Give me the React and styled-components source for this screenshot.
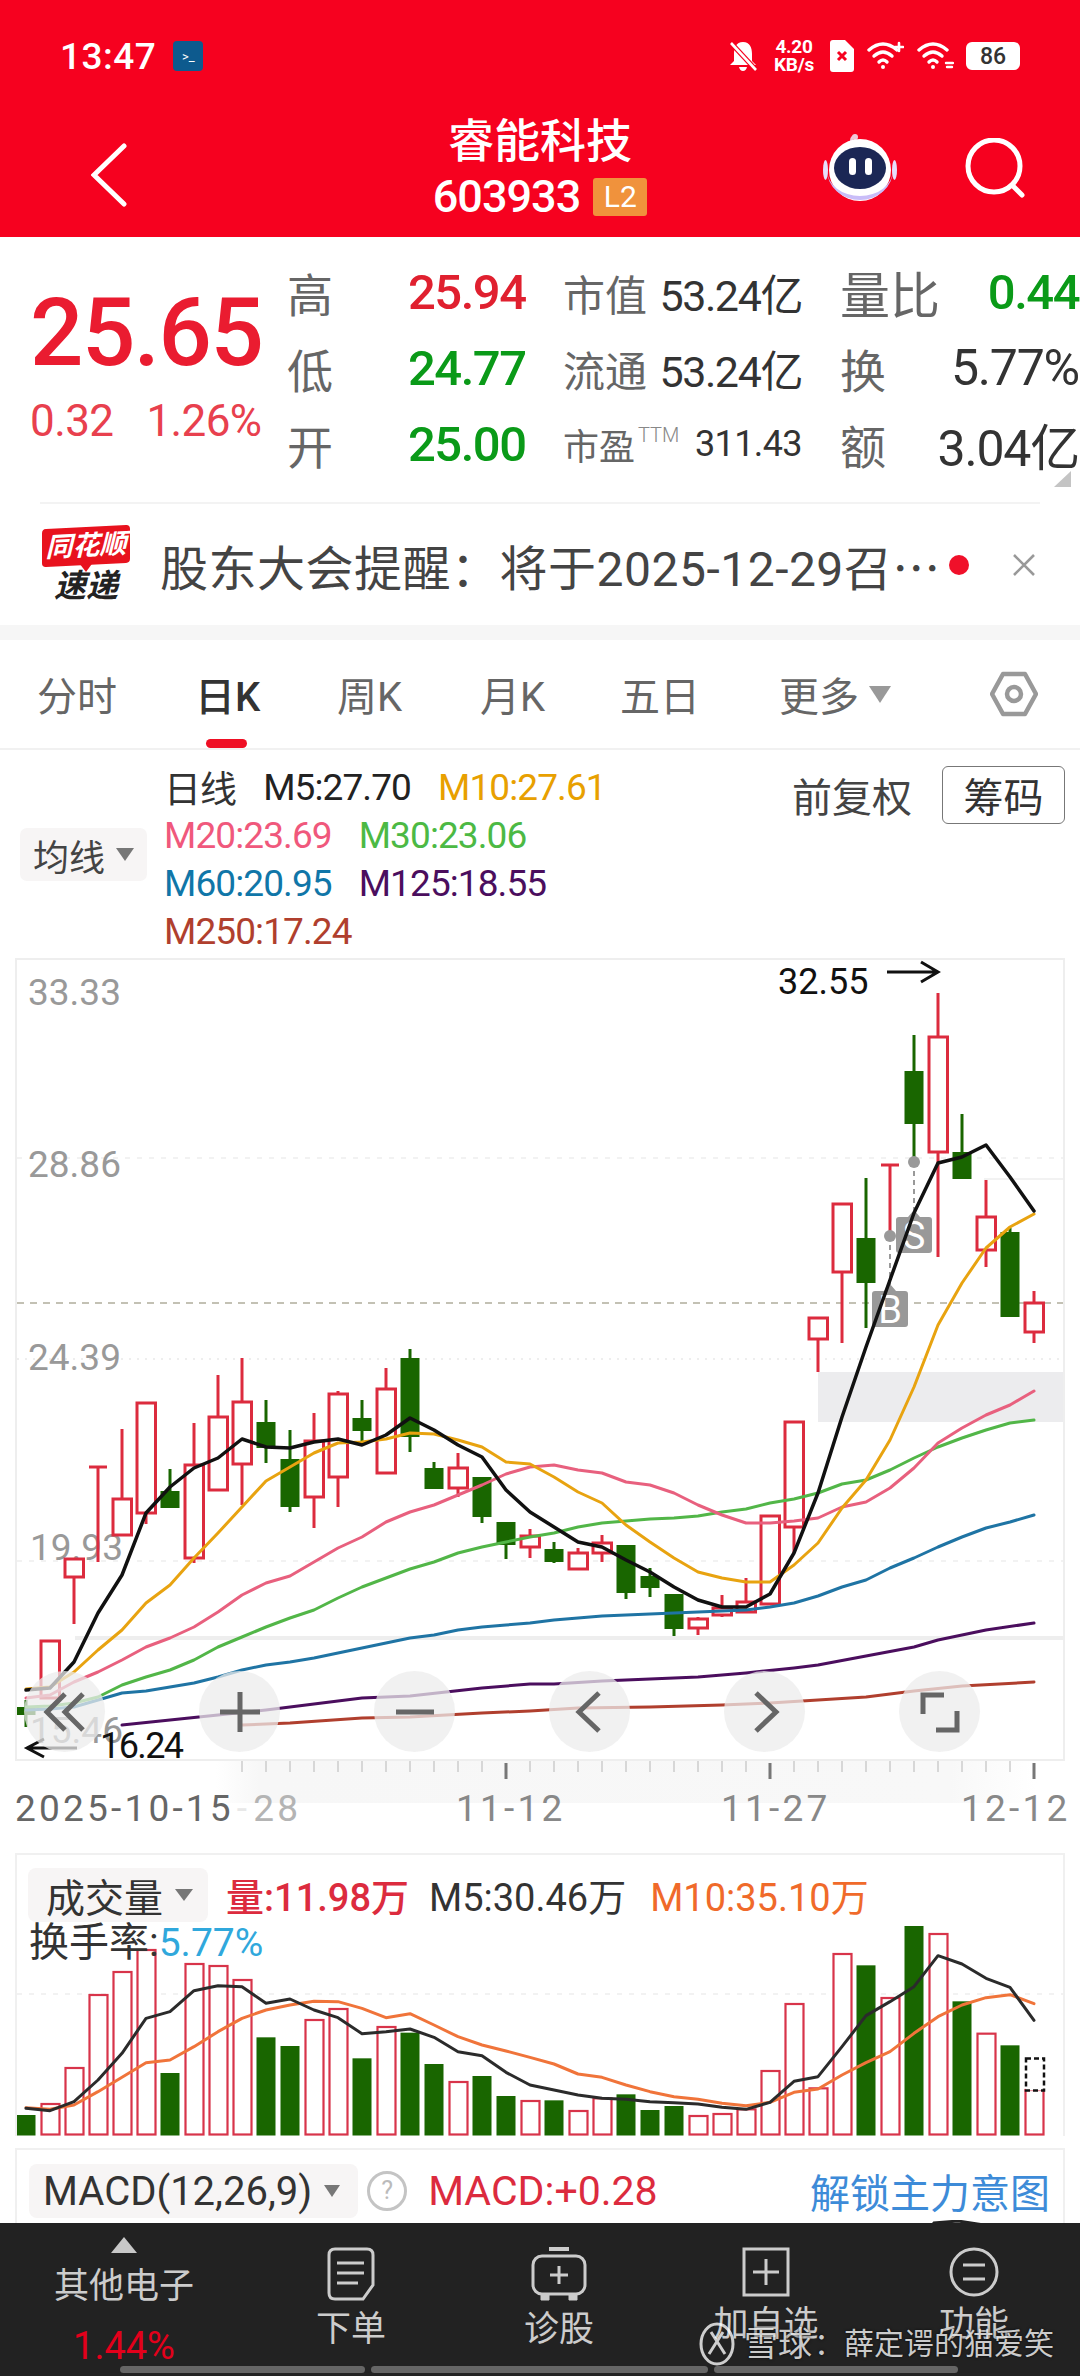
import styled, { createGlobalStyle } from "styled-components"

const Global = createGlobalStyle`
  html, body { margin: 0; padding: 0; background: #fff; }
  body { font-family: Roboto, "Noto Sans CJK SC", sans-serif; color: #333; }
  * { box-sizing: border-box; }
`

const RED = "#dc2b3e"
const GREEN = "#196600"
const stepX = (i) => 26 + 24 * i

// i => type, wick top, body top, body bottom, wick bottom
const candles = [
  ["g", 1700, 1707, 1715, 1727], ["r", 1641, 1641, 1698, 1698], ["r", 1559, 1559, 1577, 1624], ["r", 1467, 1467, 1468, 1562],
  ["r", 1429, 1499, 1535, 1535], ["r", 1403, 1403, 1513, 1524], ["g", 1469, 1491, 1508, 1508], ["r", 1423, 1465, 1558, 1563],
  ["r", 1375, 1417, 1490, 1490], ["r", 1358, 1402, 1464, 1505], ["g", 1400, 1422, 1448, 1463], ["g", 1430, 1459, 1507, 1512],
  ["r", 1413, 1441, 1497, 1528], ["r", 1391, 1394, 1477, 1507], ["g", 1400, 1418, 1431, 1443], ["r", 1368, 1389, 1473, 1473],
  ["g", 1349, 1358, 1437, 1452], ["g", 1462, 1468, 1489, 1489], ["r", 1453, 1468, 1488, 1497], ["g", 1477, 1477, 1517, 1523],
  ["g", 1522, 1522, 1545, 1559], ["r", 1529, 1536, 1547, 1558], ["g", 1542, 1549, 1562, 1563], ["r", 1548, 1553, 1569, 1569],
  ["r", 1535, 1543, 1553, 1562], ["g", 1545, 1545, 1593, 1599], ["g", 1568, 1576, 1588, 1597], ["g", 1594, 1594, 1629, 1636],
  ["r", 1617, 1619, 1628, 1635], ["r", 1595, 1608, 1615, 1617], ["r", 1578, 1602, 1612, 1612], ["r", 1516, 1516, 1604, 1604],
  ["r", 1422, 1422, 1527, 1553], ["r", 1318, 1318, 1339, 1372], ["r", 1204, 1204, 1272, 1343], ["g", 1178, 1238, 1283, 1328],
  ["r", 1165, 1165, 1166, 1236], ["g", 1035, 1071, 1124, 1162], ["r", 993, 1037, 1152, 1257], ["g", 1114, 1152, 1179, 1179],
  ["r", 1180, 1217, 1250, 1267], ["g", 1228, 1232, 1317, 1317], ["r", 1291, 1303, 1332, 1343],
]

const m5 = [1690,1688,1662,1613,1575,1513,1487,1468,1458,1439,1447,1448,1442,1439,1445,1435,1418,1430,1445,1457,1490,1512,1527,1542,1547,1560,1572,1587,1600,1607,1607,1594,1553,1493,1417,1347,1280,1213,1163,1157,1145,1177,1211]
const m10 = [1689,1687,1672,1650,1630,1603,1585,1558,1533,1507,1481,1467,1453,1443,1442,1439,1433,1434,1440,1447,1462,1464,1477,1492,1503,1525,1542,1558,1572,1578,1582,1582,1565,1543,1508,1480,1440,1387,1325,1283,1248,1227,1214]
const m20 = [1698,1695,1682,1672,1660,1647,1638,1627,1612,1595,1583,1576,1562,1548,1537,1522,1512,1505,1495,1485,1474,1467,1465,1470,1473,1482,1485,1493,1505,1515,1523,1523,1521,1518,1507,1502,1488,1468,1443,1428,1415,1405,1391]
const m30 = [1707,1706,1703,1697,1685,1677,1670,1660,1647,1637,1627,1618,1610,1598,1587,1578,1569,1562,1553,1547,1542,1537,1533,1527,1523,1521,1519,1518,1516,1512,1509,1503,1499,1493,1484,1480,1470,1458,1447,1438,1430,1423,1420]
const m60 = [1710,1709,1707,1700,1693,1691,1687,1683,1677,1670,1665,1662,1658,1653,1648,1643,1638,1635,1630,1627,1625,1623,1620,1618,1616,1615,1614,1613,1612,1611,1610,1607,1603,1596,1587,1580,1568,1558,1547,1537,1528,1522,1515]
const m125 = [[4,1725],[8,1715],[10,1710],[14,1698],[16,1696],[19,1688],[21,1684],[22,1684],[24,1681],[26,1679],[28,1677],[30,1673],[32,1668],[33,1665],[35,1656],[37,1647],[38,1640],[40,1630],[42,1623]]
const m250 = [[9,1725],[11,1723],[14,1718],[16,1717],[19,1713],[21,1711],[23,1708],[26,1707],[29,1705],[31,1703],[33,1700],[35,1697],[37,1691],[39,1686],[42,1682]]

const volTops = [825,792,684,465,396,330,699,372,378,420,592,618,540,507,655,561,578,672,726,708,768,783,781,813,775,763,810,798,828,822,808,693,492,745,342,376,474,258,282,484,581,616,750]
const volM5 = [805,812,785,720,640,535,515,452,437,440,490,477,510,533,581,575,567,592,635,647,697,735,750,765,775,778,785,788,792,802,808,787,724,710,620,527,485,440,347,372,415,442,541]
const volM10 = [803,808,795,755,712,668,660,620,575,535,510,495,484,485,505,533,521,555,590,615,633,652,672,702,712,735,755,770,778,790,797,787,757,747,705,668,635,580,530,495,473,464,491]

const pts = (ys) => ys.map((y, i) => `${stepX(i)},${y}`).join(" ")
const sparse = (list) => list.map(([i, y]) => `${stepX(i)},${y}`).join(" ")
const volPts = (zs) => zs.map((z, i) => `${stepX(i)},${1840 + z / 3}`).join(" ")

const Page = styled.div`
  width: 1080px;
  height: 2376px;
  overflow: hidden;
  display: flex;
  flex-direction: column;
  background: #fff;
`
const Scroll = styled.div`
  height: 2223px;
  flex: none;
  overflow: hidden;
`

/* red header */
const Header = styled.header`
  height: 237px;
  background: #f6011f;
  color: #fff;
`
const StatusBar = styled.div`
  height: 112px;
  display: flex;
  align-items: center;
  padding: 0 60px;
`
const Clock = styled.span`
  font-size: 37px;
  font-weight: 500;
  letter-spacing: 0.5px;
`
const AppBadge = styled.span`
  width: 30px;
  height: 30px;
  margin-left: 17px;
  border-radius: 4px;
  background: #0d5a8e;
  color: #fff;
  font-size: 13px;
  display: flex;
  align-items: center;
  justify-content: center;
`
const StatusRight = styled.div`
  margin-left: auto;
  display: flex;
  align-items: center;
  gap: 12px;
`
const NetSpeed = styled.div`
  display: flex;
  flex-direction: column;
  align-items: center;
  font-weight: 700;
  font-size: 19px;
  line-height: 18px;
  letter-spacing: -0.3px;
  width: 48px;
`
const Battery = styled.span`
  width: 54px;
  height: 28px;
  background: #fff;
  border-radius: 6px;
  color: #333;
  font-size: 23px;
  font-weight: 500;
  display: flex;
  align-items: center;
  justify-content: center;
`
const NavBar = styled.div`
  height: 125px;
  display: grid;
  grid-template-columns: 1fr auto 1fr;
  align-items: center;
  padding: 0 55px;
`
const BackButton = styled.span`
  margin-left: 36px;
  display: flex;
`
const TitleBox = styled.div`
  display: flex;
  flex-direction: column;
  align-items: center;
  margin-top: -20px;
`
const Title = styled.div`
  font-size: 46px;
  line-height: 56px;
  font-weight: 500;
`
const CodeRow = styled.div`
  display: flex;
  align-items: center;
  gap: 13px;
  margin-top: 8px;
`
const Code = styled.span`
  font-size: 45px;
  line-height: 40px;
  font-weight: 500;
  letter-spacing: -1px;
`
const L2 = styled.span`
  width: 54px;
  height: 38px;
  background: #f0923c;
  border-radius: 3px;
  font-size: 30px;
  line-height: 38px;
  text-align: center;
`
const NavIcons = styled.div`
  justify-self: end;
  display: flex;
  align-items: center;
  gap: 68px;
  margin-top: -14px;
`

/* quote block */
const Quote = styled.section`
  height: 265px;
  padding: 17px 0 0;
  display: flex;
  position: relative;
`
const PriceBox = styled.div`
  width: 287px;
  padding: 32px 0 0 30px;
  color: #ea1c30;
`
const Price = styled.div`
  font-size: 94px;
  line-height: 94px;
  font-weight: 500;
  letter-spacing: -1.5px;
`
const Changes = styled.div`
  display: flex;
  gap: 33px;
  margin-top: 20px;
  font-size: 44px;
  line-height: 42px;
  letter-spacing: -0.6px;
  color: #e8404e;
`
const StatGrid = styled.div`
  display: grid;
  grid-template-columns: 121px 155px 239px 277px;
  grid-auto-rows: 76px;
`
const Cell = styled.div`
  display: flex;
  align-items: center;
  justify-content: ${(p) => (p.$split ? "space-between" : "flex-start")};
  padding-left: ${(p) => p.$pad || 0}px;
`
const BigLabel = styled.span`
  font-size: ${(p) => p.$size || 46}px;
  color: #666;
`
const PriceValue = styled.span`
  font-size: 49px;
  font-weight: 500;
  letter-spacing: -1.5px;
  color: ${(p) => p.$c};
`
const MidValue = styled.span`
  font-size: ${(p) => p.$size || 43}px;
  letter-spacing: ${(p) => p.$ls ?? -1.4}px;
  color: #333;
`
const Ttm = styled.span`
  font-size: 20px;
  font-weight: 300;
  color: #888;
  align-self: flex-start;
  margin: 5px 0 0 3px;
`
const LabelPair = styled.span`
  display: flex;
`
const Corner = styled.span`
  position: absolute;
  right: 9px;
  bottom: 15px;
  width: 0;
  height: 0;
  border-left: 17px solid transparent;
  border-bottom: 16px solid #c4c4c4;
`

/* news row */
const News = styled.section`
  margin: 0 40px;
  padding: 0 0 0 2px;
  height: 123px;
  border-top: 2px solid #f3f3f3;
  display: flex;
  align-items: center;
`
const Logo = styled.div`
  width: 88px;
  flex: none;
  display: flex;
  flex-direction: column;
  align-items: center;
`
const LogoTop = styled.div`
  width: 88px;
  height: 38px;
  background: #e8121e;
  border-radius: 4px;
  transform: skewY(-3deg);
  color: #fff;
  font-size: 27px;
  line-height: 38px;
  font-weight: 700;
  font-style: italic;
  text-align: center;
  position: relative;
  &::after {
    content: "";
    position: absolute;
    left: 38px;
    bottom: -7px;
    width: 0;
    height: 0;
    border-left: 6px solid transparent;
    border-right: 6px solid transparent;
    border-top: 8px solid #e8121e;
  }
`
const LogoBottom = styled.div`
  margin-top: 5px;
  font-size: 32px;
  line-height: 32px;
  font-weight: 700;
  font-style: italic;
  color: #222;
`
const NewsText = styled.div`
  margin-left: 30px;
  width: 780px;
  flex: none;
  font-size: 48px;
  letter-spacing: 0.5px;
  color: #444;
  white-space: nowrap;
  overflow: hidden;
`
const RedDot = styled.span`
  width: 20px;
  height: 20px;
  border-radius: 50%;
  background: #f0102a;
  margin-left: 9px;
  flex: none;
`
const CloseX = styled.span`
  margin-left: 43px;
  display: flex;
`
const GreyBand = styled.div`
  height: 15px;
  background: #f6f6f6;
`

/* period tabs */
const Tabs = styled.nav`
  height: 110px;
  border-bottom: 2px solid #f1f1f1;
  padding-left: 37px;
  display: grid;
  grid-template-columns: 158px 142px 143px 140px 159px 211px auto;
  align-items: center;
`
const Tab = styled.div`
  height: 108px;
  display: flex;
  align-items: center;
  gap: 10px;
  font-size: 40px;
  color: ${(p) => (p.$on ? "#333" : "#666")};
  font-weight: ${(p) => (p.$on ? 500 : 400)};
  position: relative;
  ${(p) =>
    p.$on &&
    `&::after {
      content: "";
      position: absolute;
      left: 11px;
      bottom: 0;
      width: 41px;
      height: 9px;
      border-radius: 5px;
      background: #ef0f24;
    }`}
`
const Tri = styled.span`
  width: 0;
  height: 0;
  border-left: ${(p) => p.$w || 11}px solid transparent;
  border-right: ${(p) => p.$w || 11}px solid transparent;
  border-top: ${(p) => p.$h || 17}px solid ${(p) => p.$c || "#999"};
`

/* moving average legend */
const LegendArea = styled.section`
  height: 208px;
  padding: 13px 15px 0 20px;
  display: flex;
`
const MaButton = styled.div`
  width: 127px;
  height: 53px;
  margin: 65px 17px 0 0;
  background: #f7f5f5;
  border-radius: 7px;
  display: flex;
  align-items: center;
  gap: 11px;
  padding-left: 13px;
  font-size: 36px;
  color: #444;
`
const LegendRows = styled.div`
  flex: 1;
  display: flex;
  flex-direction: column;
`
const LegendRow = styled.div`
  height: 48px;
  display: flex;
  align-items: center;
  gap: 27px;
`
const Ma = styled.span`
  font-size: 37px;
  letter-spacing: -0.9px;
  color: ${(p) => p.$c};
`
const LegendRight = styled.div`
  align-self: flex-start;
  display: flex;
  align-items: center;
  gap: 30px;
  margin-top: 3px;
  font-size: 40px;
  color: #444;
`
const ChipButton = styled.span`
  width: 123px;
  height: 58px;
  border: 1.5px solid #777;
  border-radius: 6px;
  display: flex;
  align-items: center;
  justify-content: center;
  color: #333;
`

/* main candle chart */
const ChartBox = styled.section`
  margin: 0 15px;
  height: 803px;
  border: 2px solid #eee;
  position: relative;
`
const ChartSvg = styled.svg`
  display: block;
`
const AxisText = styled.text`
  font-family: Roboto, sans-serif;
  font-size: 37px;
  fill: #999;
`
const ExtremeText = styled.text`
  font-family: Roboto, sans-serif;
  font-size: 36px;
  letter-spacing: ${(p) => p.$ls || 0}px;
  fill: #111;
`
const MarkText = styled.text`
  font-family: Roboto, sans-serif;
  font-size: 38px;
  fill: #fff;
  text-anchor: middle;
`
const ChartTools = styled.div`
  position: absolute;
  left: 7px;
  bottom: 7px;
  display: flex;
  gap: 94px;
`
const ToolButton = styled.div`
  width: 81px;
  height: 81px;
  border-radius: 50%;
  background: rgba(236, 236, 236, 0.74);
  display: flex;
  align-items: center;
  justify-content: center;
`
const Axis = styled.div`
  height: 92px;
  background: linear-gradient(90deg, #fff 20%, #f7f7f7 24%, #f8f8f8 88%, #fff 96%) no-repeat;
  background-size: 100% 42px;
`
const DateRow = styled.div`
  display: grid;
  grid-template-columns: 441px 265px 240px auto;
  padding: 9px 0 0 15px;
  font-size: 37px;
  line-height: 40px;
  letter-spacing: 3.2px;
  color: #888;
`
const DateStart = styled.span`
  color: #666;
`
const FaintDash = styled.span`
  color: #e8e8e8;
  margin-left: 3px;
`
const Faded = styled.span`
  color: #b4b4b4;
  margin-left: 3px;
`

/* sub panels */
const VolumePanel = styled.section`
  margin: 0 15px;
  height: 283px;
  border: 2px solid #f0f0f0;
  border-bottom: 0;
  position: relative;
`
const PanelHead = styled.div`
  position: absolute;
  left: 11px;
  top: 12px;
`
const HeadRow = styled.div`
  display: flex;
  align-items: center;
`
const Selector = styled.div`
  height: 54px;
  padding: 0 ${(p) => p.$right || 15}px 0 ${(p) => p.$left || 18}px;
  background: #f7f5f5;
  border-radius: 8px;
  display: flex;
  align-items: center;
  gap: 12px;
  font-size: ${(p) => p.$size || 39}px;
  color: #333;
`
const Reading = styled.span`
  font-size: ${(p) => p.$size || 38}px;
  font-weight: ${(p) => p.$w || 400};
  color: ${(p) => p.$c};
  margin-left: ${(p) => p.$gap || 0}px;
`
const TurnRow = styled.div`
  font-size: 40px;
  line-height: 44px;
  margin: -1px 0 0 1px;
  color: #333;
`
const Turn = styled.span`
  font-size: 39px;
  color: #30a8dc;
`
const MacdPanel = styled.section`
  margin: 12px 15px 0;
  height: 90px;
  border: 2px solid #f0f0f0;
  border-bottom: 0;
  padding: 12px 0 0 12px;
  position: relative;
`
const Hint = styled.span`
  width: 40px;
  height: 40px;
  margin-left: 9px;
  border: 3px solid #c4c4c4;
  border-radius: 50%;
  color: #bbb;
  font-size: 25px;
  line-height: 34px;
  text-align: center;
`
const Unlock = styled.span`
  font-size: 40px;
  color: #3d8bd8;
  margin-left: auto;
  margin-right: 13px;
`
const DiffRow = styled.div`
  display: flex;
  gap: 34px;
  font-size: 36px;
  line-height: 40px;
  padding-left: 2px;
  font-weight: 500;
  margin-top: 4px;
`
const PeakCurve = styled.svg`
  position: absolute;
  right: 57px;
  bottom: 0;
`

/* dark action bar */
const ActionBar = styled.footer`
  height: 153px;
  flex: none;
  background: #222;
  color: #ccc;
  position: relative;
  display: grid;
  grid-template-columns: 248px 206px 210px 204px 212px;
`
const SectorItem = styled.div`
  display: flex;
  flex-direction: column;
  align-items: center;
  padding-top: 14px;
`
const SectorName = styled.div`
  font-size: 35px;
  line-height: 40px;
  margin-top: 14px;
`
const SectorPct = styled.div`
  font-size: 38px;
  line-height: 40px;
  margin-top: 19px;
  color: #e3001b;
`
const Action = styled.div`
  display: flex;
  flex-direction: column;
  align-items: center;
  padding-top: 24px;
  &:last-of-type {
    padding-left: 4px;
  }
`
const ActionLabel = styled.div`
  font-size: 35px;
  line-height: 40px;
  margin-top: ${(p) => p.$top}px;
`
const Watermark = styled.div`
  position: absolute;
  left: 699px;
  top: 99px;
  display: flex;
  align-items: center;
  color: rgba(255, 255, 255, 0.78);
  text-shadow: 0 0 3px rgba(0, 0, 0, 0.8);
  font-size: 30px;
  line-height: 38px;
  white-space: nowrap;
`
const WatermarkBrand = styled.span`
  font-size: 34px;
  margin: 0 2px 0 9px;
`
const Gesture = styled.div`
  position: absolute;
  left: 120px;
  bottom: 3px;
  display: flex;
  gap: 6px;
`
const GesturePiece = styled.span`
  width: ${(p) => p.$w}px;
  height: 7px;
  border-radius: 4px;
  background: #666;
`

const Candle = ({ i, c }) => {
  const [type, wt, top, bottom, wb] = c
  const x = stepX(i)
  const color = type === "r" ? RED : GREEN
  const doji = bottom - top < 3
  return (
    <g>
      <line x1={x} x2={x} y1={wt} y2={wb} stroke={color} strokeWidth="3" />
      {doji ? (
        <line x1={x - 9} x2={x + 9} y1={top} y2={top} stroke={color} strokeWidth="3" />
      ) : type === "r" ? (
        <rect x={x - 9} y={top} width="18.5" height={bottom - top} fill="#fff" stroke={color} strokeWidth="3" />
      ) : (
        <rect x={x - 9.5} y={top} width="19" height={bottom - top} fill={color} />
      )}
    </g>
  )
}

const TradeMark = ({ x, y, label }) => (
  <g>
    <path d={`M${x - 18} ${y + 3} q0 -3 3 -3 h9 l6 -7 l6 7 h9 q3 0 3 3 v30 q0 3 -3 3 h-30 q-3 0 -3 -3 z`} fill="#999" />
    <MarkText x={x} y={y + 32}>{label}</MarkText>
  </g>
)

const Ma2 = ({ points, color, width = 3 }) => (
  <polyline points={points} fill="none" stroke={color} strokeWidth={width} strokeLinejoin="round" strokeLinecap="round" />
)

const PriceChart = () => (
  <ChartSvg width="1046" height="799" viewBox="17 960 1046 799">
    <rect x="818" y="1372" width="246" height="50" fill="#ececee" />
    <line x1="17" x2="1064" y1="1158" y2="1158" stroke="#eee" strokeWidth="1.5" strokeDasharray="5 7" />
    <line x1="17" x2="1064" y1="1359" y2="1359" stroke="#eee" strokeWidth="2" strokeDasharray="2 6" />
    <line x1="17" x2="1064" y1="1561" y2="1561" stroke="#eee" strokeWidth="1.5" strokeDasharray="5 7" />
    <line x1="17" x2="1064" y1="1303" y2="1303" stroke="#b0ad9c" strokeWidth="1.5" strokeDasharray="7 6" />
    <line x1="984" x2="1064" y1="1179" y2="1179" stroke="#eee" strokeWidth="1.5" />
    <line x1="75" x2="1064" y1="1638" y2="1638" stroke="#eee" strokeWidth="4" />
    <AxisText x="28" y="1005">33.33</AxisText>
    <AxisText x="28" y="1177">28.86</AxisText>
    <AxisText x="28" y="1370">24.39</AxisText>
    <AxisText x="30" y="1560">19.93</AxisText>
    <AxisText x="30" y="1743">15.46</AxisText>
    {candles.map((c, i) => <Candle key={i} i={i} c={c} />)}
    <line x1="890" x2="890" y1="1236" y2="1300" stroke="#999" strokeWidth="2" strokeDasharray="5 4" />
    <line x1="914" x2="914" y1="1162" y2="1217" stroke="#999" strokeWidth="2" strokeDasharray="5 4" />
    <circle cx="890" cy="1236" r="6" fill="#999" />
    <circle cx="914" cy="1162" r="6" fill="#999" />
    <TradeMark x={914} y={1217} label="S" />
    <TradeMark x={890} y={1291} label="B" />
    <Ma2 points={pts(m60)} color="#1f74a4" />
    <Ma2 points={sparse(m125)} color="#4b0e5e" />
    <Ma2 points={sparse(m250)} color="#b03f2e" />
    <Ma2 points={pts(m30)} color="#52b648" />
    <Ma2 points={pts(m20)} color="#e8607e" />
    <Ma2 points={pts(m10)} color="#e8a310" />
    <Ma2 points={pts(m5)} color="#111" width={3.5} />
    <ExtremeText x="778" y="994">32.55</ExtremeText>
    <path d="M887 972 H938 M921 962 L938 972 L921 982" fill="none" stroke="#111" strokeWidth="3" />
    <ExtremeText x="100" y="1758" $ls={-1.6}>16.24</ExtremeText>
    <path d="M77 1748 H27 M44 1739 L27 1748 L44 1757" fill="none" stroke="#111" strokeWidth="3" />
  </ChartSvg>
)

const ToolIcon = ({ d }) => (
  <svg width="48" height="48" viewBox="0 0 48 48">
    <path d={d} fill="none" stroke="#666" strokeWidth="5" />
  </svg>
)

const TickStrip = () => (
  <ChartSvg width="1080" height="19" viewBox="0 0 1080 19">
    {candles.map((c, i) => {
      if (i < 9) return null
      const major = i === 20 || i === 31 || i === 42
      return (
        <line key={i} x1={stepX(i)} x2={stepX(i)} y1={major ? 2 : 0} y2={major ? 18 : 11}
          stroke={major ? "#777" : "#ccc"} strokeWidth={major ? 3 : 1.5} />
      )
    })}
  </ChartSvg>
)

const VolumeChart = () => (
  <ChartSvg width="1046" height="281" viewBox="17 1855 1046 281">
    <line x1="17" x2="1064" y1="1994" y2="1994" stroke="#eee" strokeWidth="1.5" strokeDasharray="5 7" />
    {volTops.map((z, i) => {
      const top = 1840 + z / 3
      const x = stepX(i)
      return candles[i][0] === "r" ? (
        <rect key={i} x={x - 8.5} y={top} width="18" height={2134.5 - top} fill="#fff" stroke="#d8344a" strokeWidth="2.2" />
      ) : (
        <rect key={i} x={x - 9.5} y={top} width="19" height={2135.5 - top} fill={GREEN} />
      )
    })}
    <rect x="1026" y="2058.5" width="18" height="32" fill="#fff" stroke="#111" strokeWidth="2.5" strokeDasharray="5 3" />
    <Ma2 points={volPts(volM10)} color="#f0743a" />
    <Ma2 points={volPts(volM5)} color="#2b2b2b" />
  </ChartSvg>
)

const Wifi = ({ plus }) => (
  <svg width="38" height="30" viewBox="0 0 38 30" fill="none" stroke="#fff" strokeWidth="3.4" strokeLinecap="round">
    <path d="M3 9 Q17 -3 31 9" />
    <path d="M8 15 Q17 7 26 15" />
    <path d="M13 21 Q17 17 21 21" />
    <circle cx="17" cy="26" r="2" fill="#fff" stroke="none" />
    {plus && <path d="M33 2 V10 M29 6 H37" strokeWidth="2.6" />}
    {!plus && <path d="M30 22 H37 M31 26 H36" strokeWidth="2.4" />}
  </svg>
)

export default function App() {
  return (
    <Page>
      <Global />
      <Scroll>
        <Header>
          <StatusBar>
            <Clock>13:47</Clock>
            <AppBadge>{">_"}</AppBadge>
            <StatusRight>
              <svg width="30" height="32" viewBox="0 0 30 32">
                <path d="M15 2 C8 2 6 8 6 14 V21 L2 25 H28 L24 21 V14 C24 8 22 2 15 2 Z M11 27 H19 Q18 31 15 31 Q12 31 11 27 Z" fill="#fff" />
                <path d="M3 3 L28 30" stroke="#f6011f" strokeWidth="5" />
                <path d="M3 3 L28 30" stroke="#fff" strokeWidth="2.6" />
              </svg>
              <NetSpeed><span>4.20</span><span>KB/s</span></NetSpeed>
              <svg width="24" height="32" viewBox="0 0 24 32">
                <path d="M3 0 H15 L24 9 V29 Q24 32 21 32 H3 Q0 32 0 29 V3 Q0 0 3 0 Z" fill="#fff" />
                <path d="M8 12 L16 20 M16 12 L8 20" stroke="#f6011f" strokeWidth="3" />
              </svg>
              <Wifi plus />
              <Wifi />
              <Battery>86</Battery>
            </StatusRight>
          </StatusBar>
          <NavBar>
            <BackButton>
              <svg width="36" height="64" viewBox="0 0 36 64" fill="none" stroke="#fff" strokeWidth="5" strokeLinecap="round">
                <path d="M33 3 L3 32 L33 61" />
              </svg>
            </BackButton>
            <TitleBox>
              <Title>睿能科技</Title>
              <CodeRow>
                <Code>603933</Code>
                <L2>L2</L2>
              </CodeRow>
            </TitleBox>
            <NavIcons>
              <svg width="74" height="68" viewBox="0 0 74 68">
                <path d="M30 12 Q26 3 33 2" fill="none" stroke="#f0c8d8" strokeWidth="3" />
                <circle cx="32" cy="3" r="3" fill="#f0c8d8" />
                <circle cx="37" cy="36" r="31" fill="#fff" />
                <path d="M4 36 a33 30 0 0 0 66 0 a33 26 0 0 1 -66 0" fill="#c9bdf8" />
                <ellipse cx="2.5" cy="36" rx="2.5" ry="10" fill="#e6defc" />
                <ellipse cx="71.5" cy="36" rx="2.5" ry="10" fill="#e6defc" />
                <ellipse cx="37" cy="34" rx="26" ry="21" fill="#1b2755" />
                <rect x="26" y="24" width="7" height="17" rx="3.5" fill="#fff" />
                <rect x="42" y="24" width="7" height="17" rx="3.5" fill="#fff" />
              </svg>
              <svg width="60" height="60" viewBox="0 0 60 60" fill="none" stroke="#fff" strokeWidth="5" strokeLinecap="round">
                <circle cx="29" cy="28" r="26" />
                <path d="M48 48 L57 57" />
              </svg>
            </NavIcons>
          </NavBar>
        </Header>

        <Quote>
          <PriceBox>
            <Price>25.65</Price>
            <Changes><span>0.32</span><span>1.26%</span></Changes>
          </PriceBox>
          <StatGrid>
            <Cell><BigLabel>高</BigLabel></Cell>
            <Cell><PriceValue $c="#e0202f">25.94</PriceValue></Cell>
            <Cell $split><BigLabel $size={42}>市值</BigLabel><MidValue>53.24亿</MidValue></Cell>
            <Cell $split $pad={38}><BigLabel $size={50}>量比</BigLabel><PriceValue $c="#0a9a18">0.44</PriceValue></Cell>
            <Cell><BigLabel>低</BigLabel></Cell>
            <Cell><PriceValue $c="#0a9a18">24.77</PriceValue></Cell>
            <Cell $split><BigLabel $size={42}>流通</BigLabel><MidValue>53.24亿</MidValue></Cell>
            <Cell $split $pad={38}><BigLabel>换</BigLabel><MidValue $size={50} $ls={-1.2}>5.77%</MidValue></Cell>
            <Cell><BigLabel>开</BigLabel></Cell>
            <Cell><PriceValue $c="#0a9a18">25.00</PriceValue></Cell>
            <Cell $split>
              <LabelPair><BigLabel $size={36}>市盈</BigLabel><Ttm>TTM</Ttm></LabelPair>
              <MidValue $size={36} $ls={-0.6}>311.43</MidValue>
            </Cell>
            <Cell $split $pad={38}><BigLabel>额</BigLabel><MidValue $size={50} $ls={-1.2}>3.04亿</MidValue></Cell>
          </StatGrid>
          <Corner />
        </Quote>

        <News>
          <Logo>
            <LogoTop>同花顺</LogoTop>
            <LogoBottom>速递</LogoBottom>
          </Logo>
          <NewsText>股东大会提醒：将于2025-12-29召⋯</NewsText>
          <RedDot />
          <CloseX>
            <svg width="24" height="24" viewBox="0 0 24 24" stroke="#999" strokeWidth="2.6">
              <path d="M2 2 L22 22 M22 2 L2 22" />
            </svg>
          </CloseX>
        </News>
        <GreyBand />

        <Tabs>
          <Tab>分时</Tab>
          <Tab $on>日K</Tab>
          <Tab>周K</Tab>
          <Tab>月K</Tab>
          <Tab>五日</Tab>
          <Tab>更多<Tri /></Tab>
          <svg width="48" height="46" viewBox="0 0 48 46" fill="none" stroke="#999" strokeWidth="4.5" strokeLinejoin="round">
            <path d="M13 3 H35 L46 23 L35 43 H13 L2 23 Z" />
            <circle cx="24" cy="23" r="7" />
          </svg>
        </Tabs>

        <LegendArea>
          <MaButton>均线<Tri $w={9} $h={13} $c="#777" /></MaButton>
          <LegendRows>
            <LegendRow><Ma $c="#333">日线</Ma><Ma $c="#222">M5:27.70</Ma><Ma $c="#e8a000">M10:27.61</Ma></LegendRow>
            <LegendRow><Ma $c="#f0587c">M20:23.69</Ma><Ma $c="#4cb944">M30:23.06</Ma></LegendRow>
            <LegendRow><Ma $c="#1076a8">M60:20.95</Ma><Ma $c="#4b0e5e">M125:18.55</Ma></LegendRow>
            <LegendRow><Ma $c="#b03f2e">M250:17.24</Ma></LegendRow>
          </LegendRows>
          <LegendRight>
            前复权
            <ChipButton>筹码</ChipButton>
          </LegendRight>
        </LegendArea>

        <ChartBox>
          <PriceChart />
          <ChartTools>
            <ToolButton><ToolIcon d="M24 6 L6 24 L24 42 M42 6 L24 24 L42 42" /></ToolButton>
            <ToolButton><ToolIcon d="M24 4 V44 M4 24 H44" /></ToolButton>
            <ToolButton><ToolIcon d="M5 24 H43" /></ToolButton>
            <ToolButton><ToolIcon d="M33 5 L13 24 L33 43" /></ToolButton>
            <ToolButton><ToolIcon d="M15 5 L35 24 L15 43" /></ToolButton>
            <ToolButton><ToolIcon d="M7 26 V7 H28 M20 42 H41 V23" /></ToolButton>
          </ChartTools>
        </ChartBox>
        <Axis>
          <TickStrip />
          <DateRow>
            <DateStart>2025-10-15<FaintDash>-</FaintDash><Faded>28</Faded></DateStart>
            <span>11-12</span>
            <span>11-27</span>
            <span>12-12</span>
          </DateRow>
        </Axis>

        <VolumePanel>
          <VolumeChart />
          <PanelHead>
            <HeadRow>
              <Selector>成交量<Tri $w={9} $h={12} $c="#777" /></Selector>
              <Reading $c="#dc2b3e" $w={500} $gap={18}>量:11.98万</Reading>
              <Reading $c="#333" $gap={20}>M5:30.46万</Reading>
              <Reading $c="#f06a2a" $gap={24}>M10:35.10万</Reading>
            </HeadRow>
            <TurnRow>换手率:<Turn>5.77%</Turn></TurnRow>
          </PanelHead>
        </VolumePanel>

        <MacdPanel>
          <HeadRow>
            <Selector $size={40} $left={14} $right={18}>MACD(12,26,9)<Tri $w={8} $h={12} $c="#777" /></Selector>
            <Hint>?</Hint>
            <Reading $c="#dc2b3e" $gap={21} $size={41}>MACD:+0.28</Reading>
            <Unlock>解锁主力意图</Unlock>
          </HeadRow>
          <DiffRow>
            <Reading $c="#222">DIFF:+1.00</Reading>
            <Reading $c="#e8662a">DEA:+1.71</Reading>
          </DiffRow>
          <PeakCurve width="84" height="18" viewBox="0 0 84 18">
            <path d="M15 2 V18" stroke="#dc2b3e" strokeWidth="2.5" />
            <path d="M1 17 L12 3 L36 1 L62 5 L82 17" fill="none" stroke="#222" strokeWidth="3" />
          </PeakCurve>
        </MacdPanel>
      </Scroll>

      <ActionBar>
        <SectorItem>
          <svg width="26" height="16" viewBox="0 0 26 16"><path d="M13 0 L26 16 H0 Z" fill="#c8c8c8" /></svg>
          <SectorName>其他电子</SectorName>
          <SectorPct>1.44%</SectorPct>
        </SectorItem>
        <Action>
          <svg width="48" height="54" viewBox="0 0 48 54" fill="none" stroke="#ccc" strokeWidth="3">
            <path d="M8 2 H40 Q46 2 46 8 V38 L36 52 H8 Q2 52 2 46 V8 Q2 2 8 2 Z" />
            <path d="M10 16 H37 M10 26 H37 M10 36 H31" />
          </svg>
          <ActionLabel $top={9}>下单</ActionLabel>
        </Action>
        <Action>
          <svg width="56" height="54" viewBox="0 0 56 54" fill="none" stroke="#ccc" strokeWidth="3">
            <path d="M18 2 H38" strokeWidth="4" />
            <rect x="2" y="9" width="52" height="38" rx="9" />
            <path d="M28 19 V37 M19 28 H37" />
            <path d="M10 47 V53 H18 V47 M38 47 V53 H46 V47" fill="#ccc" strokeWidth="1" />
          </svg>
          <ActionLabel $top={9}>诊股</ActionLabel>
        </Action>
        <Action>
          <svg width="48" height="50" viewBox="0 0 48 50" fill="none" stroke="#ccc" strokeWidth="3">
            <rect x="2" y="2" width="44" height="46" />
            <path d="M24 12 V38 M11 25 H37" />
          </svg>
          <ActionLabel $top={8}>加自选</ActionLabel>
        </Action>
        <Action>
          <svg width="50" height="50" viewBox="0 0 50 50" fill="none" stroke="#ccc" strokeWidth="3">
            <circle cx="25" cy="25" r="23" />
            <path d="M14 18 H36 M14 32 H36" />
          </svg>
          <ActionLabel $top={8}>功能</ActionLabel>
        </Action>
        <Watermark>
          <svg width="36" height="44" viewBox="0 0 36 44" fill="none" stroke="rgba(255,255,255,0.78)" strokeWidth="3">
            <ellipse cx="18" cy="22" rx="16" ry="20" />
            <path d="M12 10 L26 32 M24 10 L10 32" />
          </svg>
          <WatermarkBrand>雪球</WatermarkBrand>：薛定谔的猫爱笑
        </Watermark>
        <Gesture>
          <GesturePiece $w={245} />
          <GesturePiece $w={337} />
          <GesturePiece $w={244} />
        </Gesture>
      </ActionBar>
    </Page>
  )
}
